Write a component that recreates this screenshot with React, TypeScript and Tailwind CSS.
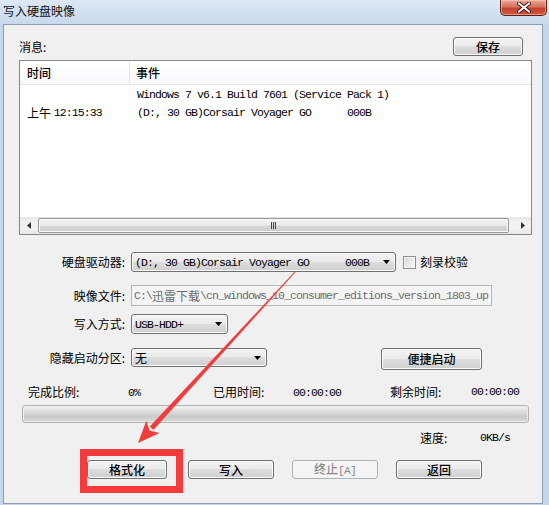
import React from "react";

const mono = "font-['Liberation_Mono',monospace] text-[11.5px] tracking-[-0.9px]";
const btnFace =
  "border-[#707070] bg-[linear-gradient(#f2f2f2_0%,#ebebeb_49%,#dddddd_50%,#cfcfcf_100%)] shadow-[inset_0_0_0_1px_#fbfbfb]";

const M = ({ children }: { children: React.ReactNode }) => <span className={mono}>{children}</span>;

const WinButton = ({
  label,
  className = "",
  disabled = false,
}: {
  label: React.ReactNode;
  className?: string;
  disabled?: boolean;
}) => (
  <div
    className={`flex items-center justify-center rounded-[3px] border ${
      disabled ? "border-[#adb2b5] bg-[#f4f4f4] text-[#8a8a8a]" : `${btnFace} text-black`
    } ${className}`}
  >
    <span className="leading-none font-medium">{label}</span>
  </div>
);

const Combo = ({ children, className = "" }: { children: React.ReactNode; className?: string }) => (
  <div className={`flex items-center rounded-[3px] border pl-[3px] pr-[5px] ${btnFace} ${className}`}>
    <div className="flex-1 whitespace-pre leading-[14px]">{children}</div>
    <svg width="7" height="4" viewBox="0 0 7 4">
      <path d="M0 0H7L3.5 4Z" fill="#000" />
    </svg>
  </div>
);

const Label = ({ children }: { children: React.ReactNode }) => (
  <div className="w-[112px] shrink-0 pr-[6px] text-right leading-none">{children}</div>
);

const CloseButton = () => (
  <div className="mr-[2px] flex h-[16px] w-[47px] items-center justify-center rounded-b-[5px] border border-t-0 border-[#5a2219] bg-[linear-gradient(#e9a896_0%,#d7735d_45%,#c4412b_55%,#d05a3f_100%)] shadow-[inset_0_0_0_1px_rgba(255,210,200,0.5)]">
    <svg width="14" height="11" viewBox="0 0 14 11">
      <path d="M2 1.5L12 9.5M12 1.5L2 9.5" stroke="#3b1510" strokeWidth="4" strokeLinecap="round" />
      <path d="M2 1.5L12 9.5M12 1.5L2 9.5" stroke="#ffffff" strokeWidth="2.2" strokeLinecap="round" />
    </svg>
  </div>
);

const ScrollArrow = ({ dir }: { dir: "left" | "right" }) => (
  <div className="flex w-[17px] items-center justify-center">
    <svg width="4" height="7" viewBox="0 0 4 7">
      <path d={dir === "left" ? "M4 0V7L0 3.5Z" : "M0 0V7L4 3.5Z"} fill="#333" />
    </svg>
  </div>
);

export default function App() {
  return (
    <div className="relative flex h-[505px] w-[549px] flex-col overflow-hidden bg-[#c3d6ec] font-['Noto_Sans_CJK_SC',sans-serif] text-[12px] text-black">
      {/* Title bar */}
      <div className="flex h-[24px] shrink-0 items-start justify-between bg-[linear-gradient(#dde8f4,#c8d9ed)]">
        <div className="pl-[3px] pt-[3px] text-[12px] leading-[16px] text-[#111]">写入硬盘映像</div>
        <CloseButton />
      </div>

      {/* Frame + client */}
      <div className="flex flex-1 pb-[1px] pl-[3px] pr-[6px]">
        <div className="flex flex-1 flex-col border border-[#8e9db0] bg-[#f0f0f0] pl-[15px] pr-[10px] pt-[12px]">
          {/* 消息 + 保存 */}
          <div className="flex h-[19px] items-center justify-between">
            <span className="leading-none">消息:</span>
            <WinButton label="保存" className="mr-[9px] h-[19px] w-[70px]" />
          </div>

          {/* List view */}
          <div className="mt-[4px] flex h-[175px] flex-col border border-[#828790] bg-white">
            <div className="flex h-[24px] shrink-0 border-b border-[#e5e5e5] bg-[linear-gradient(#ffffff,#f7f8fa)]">
              <div className="flex w-[110px] items-center border-r border-[#e5e5e5] pl-[7px] font-medium leading-none">
                时间
              </div>
              <div className="flex items-center pl-[6px] font-medium leading-none">事件</div>
            </div>
            <div className="flex flex-1 pt-[1px]">
              <div className="flex h-[36px] w-[110px] items-end pl-[7px]">
                <div className="flex h-[18px] items-center leading-none">
                  上午&nbsp;<M>12:15:33</M>
                </div>
              </div>
              <div className="flex flex-col pl-[7px]">
                <div className="flex h-[18px] items-center whitespace-pre leading-none">
                  <M>Windows 7 v6.1 Build 7601 (Service Pack 1)</M>
                </div>
                <div className="flex h-[18px] items-center whitespace-pre leading-none">
                  <M>(D:, 30 GB)Corsair Voyager GO      000B</M>
                </div>
              </div>
            </div>
            {/* horizontal scrollbar */}
            <div className="flex h-[17px] shrink-0 bg-[linear-gradient(#e6e6e6,#f2f2f2_30%,#f2f2f2_70%,#e6e6e6)]">
              <ScrollArrow dir="left" />
              <div className="my-[1px] ml-[1px] mr-[5px] flex flex-1 items-center justify-center rounded-[2px] border border-[#979797] bg-[linear-gradient(#f6f6f6,#e7e7e7_50%,#d7d7d7_51%,#cdcdcd)] shadow-[inset_0_0_0_1px_#fafafa]">
                <div className="flex gap-[1px]">
                  <span className="h-[7px] w-[1px] bg-[#444]" />
                  <span className="h-[7px] w-[1px] bg-[#444]" />
                  <span className="h-[7px] w-[1px] bg-[#444]" />
                </div>
              </div>
              <ScrollArrow dir="right" />
            </div>
          </div>

          {/* 硬盘驱动器 */}
          <div className="mt-[17px] flex h-[20px] items-center">
            <Label>硬盘驱动器:</Label>
            <Combo className="h-[20px] w-[265px]">
              <M>(D:, 30 GB)Corsair Voyager GO      000B</M>
            </Combo>
            <div className="ml-[7px] h-[13px] w-[13px] border border-[#8f8f8f] bg-[linear-gradient(135deg,#d6d6d6,#fbfbfb)] shadow-[inset_0_0_0_1px_#f4f4f4]" />
            <span className="ml-[4px] leading-none">刻录校验</span>
          </div>

          {/* 映像文件 */}
          <div className="mt-[13px] flex h-[21px] items-center">
            <Label>映像文件:</Label>
            <div className="flex h-[21px] w-[361px] items-center whitespace-pre border border-[#b6b6b6] bg-[#f4f4f4] pl-[2px] leading-none text-[#6d6d6d]">
              <M>C:\</M>迅雷下载<M>\cn_windows_10_consumer_editions_version_1803_up</M>
            </div>
          </div>

          {/* 写入方式 */}
          <div className="mt-[8px] flex h-[20px] items-center">
            <Label>写入方式:</Label>
            <Combo className="h-[20px] w-[97px]">
              <M>USB-HDD+</M>
            </Combo>
          </div>

          {/* 隐藏启动分区 */}
          <div className="mt-[14px] flex h-[22px] items-start">
            <div className="flex h-[19px] items-center">
              <Label>隐藏启动分区:</Label>
              <Combo className="h-[19px] w-[136px]">无</Combo>
            </div>
            <WinButton label="便捷启动" className="ml-[114px] h-[22px] w-[101px]" />
          </div>

          {/* stats */}
          <div className="mt-[14px] flex h-[16px] items-center pl-[9px] leading-none">
            <span className="w-[100px]">完成比例:</span>
            <span className="w-[85px]">
              <M>0%</M>
            </span>
            <span className="w-[80px]">已用时间:</span>
            <span className="w-[97px]">
              <M>00:00:00</M>
            </span>
            <span className="w-[81px]">剩余时间:</span>
            <M>00:00:00</M>
          </div>

          {/* progress */}
          <div className="ml-[3px] mt-[5px] h-[18px] w-[507px] rounded-[3px] border border-[#b2b2b2] bg-[linear-gradient(#f3f3f3,#dcdcdc_35%,#c9c9c9_65%,#dadada)] shadow-[inset_0_0_0_1px_#ececec]" />

          {/* speed */}
          <div className="mt-[7px] flex h-[16px] items-center pl-[401px] leading-none">
            <span className="w-[60px]">速度:</span>
            <M>0KB/s</M>
          </div>

          {/* buttons */}
          <div className="mt-[14px] flex h-[19px] items-center">
            <WinButton label="格式化" className="ml-[68px] h-[19px] w-[80px]" />
            <WinButton label="写入" className="ml-[21px] h-[19px] w-[86px]" />
            <WinButton
              label={
                <>
                  终止<M>[A]</M>
                </>
              }
              disabled
              className="ml-[18px] h-[19px] w-[86px]"
            />
            <WinButton label="返回" className="ml-[18px] h-[19px] w-[86px]" />
          </div>
        </div>
      </div>

      {/* annotation overlay */}
      <svg className="pointer-events-none absolute inset-0" width="549" height="505" viewBox="0 0 549 505">
        <rect x="83.5" y="452.5" width="96" height="37" fill="none" stroke="#f53b3b" strokeWidth="7" />
        <polygon points="295.4,272.3 294.6,271.7 149.8,426.6 153.4,430" fill="#f03c3c" />
        <polygon points="138,443 146.3,420.7 149.5,430.5 159.5,432.9" fill="#f03c3c" />
      </svg>
    </div>
  );
}
